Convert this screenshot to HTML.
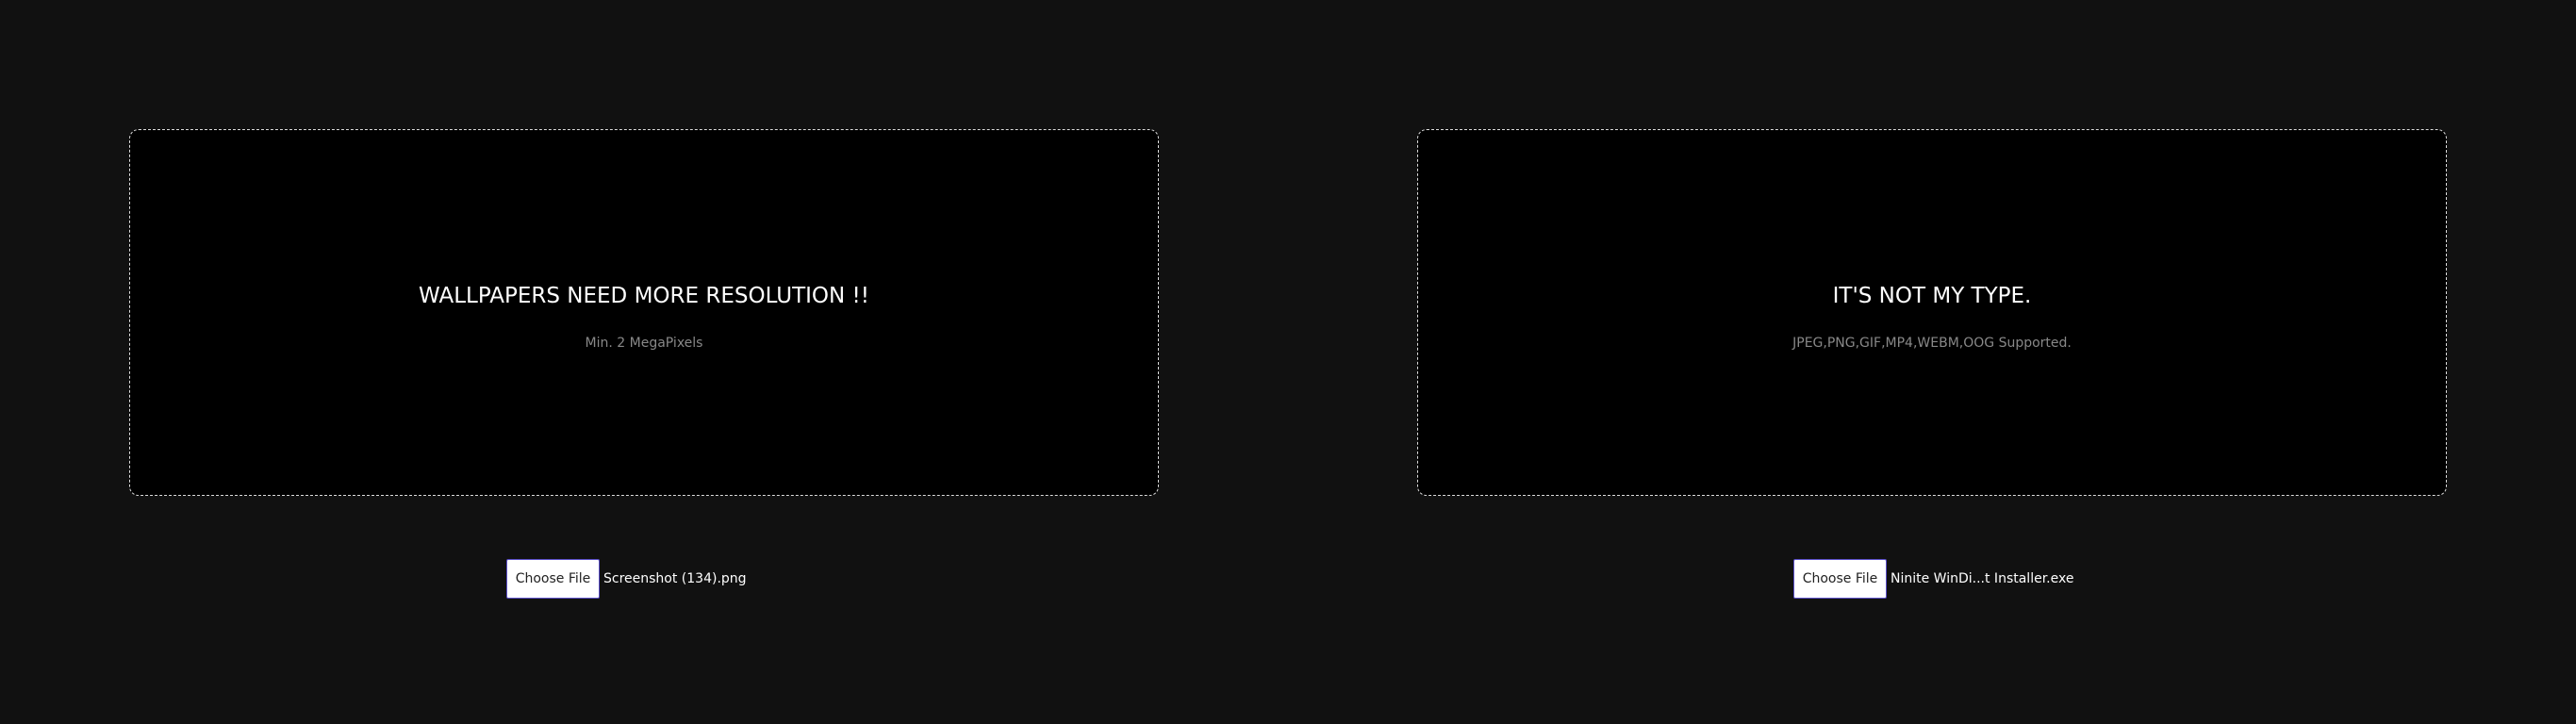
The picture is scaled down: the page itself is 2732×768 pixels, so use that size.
<!DOCTYPE html>
<html><head><style>
html,body{margin:0;padding:0;background:#111;width:2732px;height:768px;overflow:hidden;font-family:"DejaVu Sans","Liberation Sans",sans-serif;}
.box{position:absolute;top:137px;width:1090px;height:387px;background:#000;border:1px dashed #ddd;border-radius:10px;}
.t{position:absolute;left:0;right:0;top:163px;text-align:center;color:#fff;font-size:23px;}
.s{position:absolute;left:0;right:0;top:218px;text-align:center;color:#888;font-size:14px;}
.f{position:absolute;top:593px;height:42px;display:flex;align-items:center;}
.b{width:97px;height:40px;background:#fff;border:1.5px solid #5b4fc9;border-radius:2px;color:#222;font-size:14px;display:flex;align-items:center;justify-content:center;}
.n{color:#fff;font-size:14px;margin-left:4px;}
</style></head><body>
<div class="box" style="left:137px"><div class="t">WALLPAPERS NEED MORE RESOLUTION !!</div><div class="s">Min. 2 MegaPixels</div></div>
<div class="box" style="left:1503px"><div class="t">IT'S NOT MY TYPE.</div><div class="s">JPEG,PNG,GIF,MP4,WEBM,OOG Supported.</div></div>
<div class="f" style="left:537px"><div class="b">Choose File</div><div class="n">Screenshot (134).png</div></div>
<div class="f" style="left:1902px"><div class="b">Choose File</div><div class="n">Ninite WinDi...t Installer.exe</div></div>
</body></html>
